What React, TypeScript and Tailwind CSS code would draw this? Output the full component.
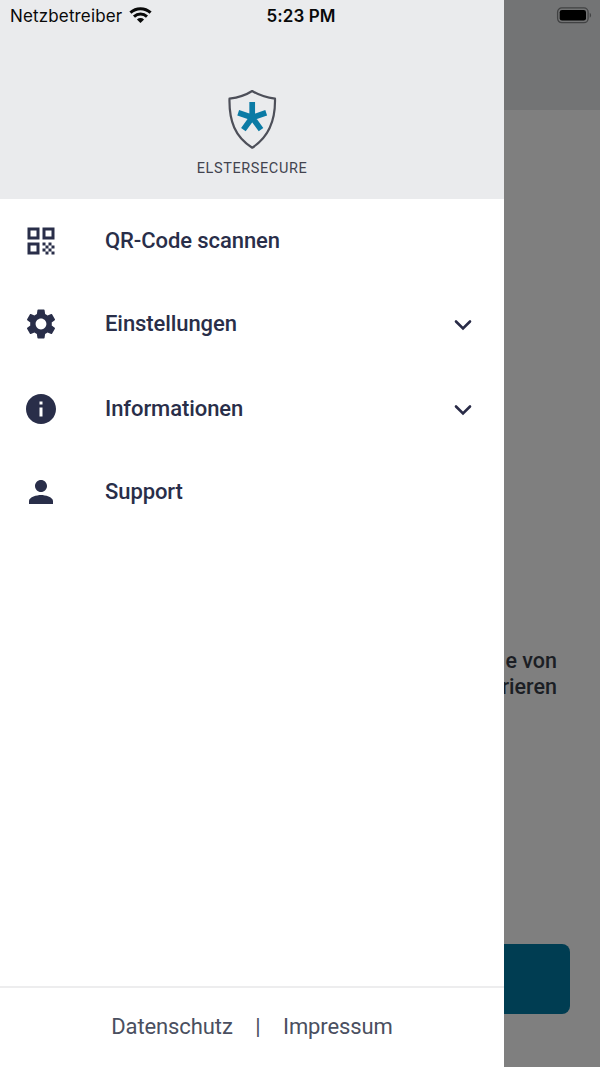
import type { ReactNode } from 'react';
import { MdInfo, MdPerson, MdQrCode, MdSettings } from 'react-icons/md';

function ShieldLogo() {
  return (
    <svg width="50" height="61" viewBox="0 0 50 61" fill="none">
      <path
        d="M25.200 2C19 6 11.500 8.500 2.500 9.700C2 32 8 48 25.200 58.700C42 48 48.500 32 48 9.700C39 8.500 31.500 6 25.200 2Z"
        stroke="#4d4f59"
        strokeWidth="2.200"
        strokeLinejoin="round"
      />
      <path
        d="M25.200 29V13M25.200 28.500L11.200 23.800M25.200 28.500L39.200 23.800M25.200 28.500L16.400 40.600M25.200 28.500L34 40.600"
        stroke="#0b7ba5"
        strokeWidth="5.700"
      />
    </svg>
  );
}

function ChevronDown() {
  return (
    <svg className="mt-[2px]" width="20" height="14" viewBox="0 0 20 14" fill="none">
      <path d="M3 3.500L10 10.500L17 3.500" stroke="#292b47" strokeWidth="2.600" strokeLinecap="round" />
    </svg>
  );
}

function StatusBar() {
  return (
    <div className="absolute inset-x-0 top-0 z-20 flex h-[31px] items-center pl-[10px] pr-[8px] font-[Inter,sans-serif] text-[17px] text-[#090909]">
      <div className="flex flex-1 items-center gap-[7px]">
        <span className="pt-[2px] tracking-[0.15px]">Netzbetreiber</span>
        <svg width="23" height="17" viewBox="0 0 23 17" fill="none" stroke="#090909" strokeWidth="3">
          <path d="M1.400 5.600C7.200 0.300 15.800 0.300 21.600 5.600" />
          <path d="M5 9.600C8.700 6.200 14.300 6.200 18 9.600" />
          <path d="M11.500 16L7.900 12.400C10 10.600 13 10.600 15.100 12.400Z" fill="#090909" stroke="none" />
        </svg>
      </div>
      <span className="pt-[2px] font-semibold tracking-[0.1px]">5:23 PM</span>
      <div className="flex flex-1 justify-end">
        <svg width="36" height="17" viewBox="0 0 36 17" fill="none">
          <rect x="1.600" y="0.900" width="30.500" height="14.800" rx="4.200" stroke="#414243" strokeWidth="1.300" />
          <rect x="3.700" y="3" width="26.300" height="10.600" rx="2.300" fill="#000" />
          <path d="M33.700 5.800C35.500 6.500 35.500 10.100 33.700 10.800Z" fill="#414243" />
        </svg>
      </div>
    </div>
  );
}

interface MenuItemProps {
  icon: ReactNode;
  label: string;
  expandable?: boolean;
}

function MenuItem({ icon, label, expandable }: MenuItemProps) {
  return (
    <li className="flex h-[83px] items-center pl-[23px] pr-[31px]">
      {icon}
      <span className="ml-[46px] flex-1 text-[22px] font-medium tracking-[-0.08px]">{label}</span>
      {expandable && <ChevronDown />}
    </li>
  );
}

function Drawer() {
  return (
    <aside className="absolute inset-y-0 left-0 z-10 flex w-[504px] flex-col bg-white text-[#292e49]">
      <header className="flex h-[199px] flex-col items-center bg-[#eaebed] pt-[89px]">
        <ShieldLogo />
        <span className="mt-[8px] text-[14.500px] leading-[22px] tracking-[0.6px] text-[#42434f]">ELSTERSECURE</span>
      </header>
      <nav className="flex flex-1 flex-col gap-[2px]">
        <ul>
          <MenuItem icon={<MdQrCode size={36} />} label="QR-Code scannen" />
          <MenuItem icon={<MdSettings size={36} />} label="Einstellungen" expandable />
        </ul>
        <ul>
          <MenuItem icon={<MdInfo size={36} />} label="Informationen" expandable />
          <MenuItem icon={<MdPerson size={36} />} label="Support" />
        </ul>
      </nav>
      <footer className="flex h-[81px] items-center justify-center gap-[22.500px] border-t-2 border-[#ededee] pb-[2px] text-[22px] tracking-[-0.1px] text-[#4a4f60]">
        <span>Datenschutz</span>
        <span>|</span>
        <span>Impressum</span>
      </footer>
    </aside>
  );
}

// Start page, dimmed while the drawer is open
function Page() {
  return (
    <main className="flex h-full flex-col bg-[#7f7f7f]">
      <div className="h-[110px] bg-[#737475]" />
      <p className="mt-[538px] pr-[43px] text-right text-[21.500px] leading-[26px] font-medium text-[#1b1e24]">
        e von
        <br />
        rieren
      </p>
      <div className="mx-[30px] mt-[244px] h-[70px] rounded-[8px] bg-[#003d52]" />
    </main>
  );
}

export default function App() {
  return (
    <div className="relative h-[1067px] w-[600px] overflow-hidden font-[Roboto,sans-serif]">
      <Page />
      <Drawer />
      <StatusBar />
    </div>
  );
}
